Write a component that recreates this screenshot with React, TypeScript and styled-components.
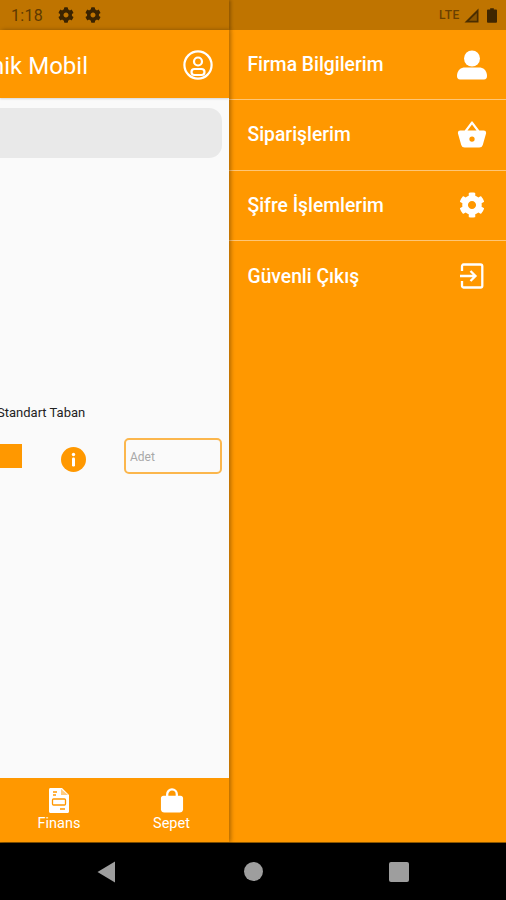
import React from "react";
import styled, { createGlobalStyle } from "styled-components";
import { FaCog } from "react-icons/fa";
import { IoBasket } from "react-icons/io5";

const Global = createGlobalStyle`
  html, body { margin: 0; padding: 0; background: #000; }
  body { font-family: Roboto, "Liberation Sans", sans-serif; }
`;

const Screen = styled.div`
  width: 506px; height: 900px; display: flex; flex-direction: column; overflow: hidden; background: #000;
`;
const StatusBar = styled.div`
  height: 30px; flex: none; display: flex; background: #bf7400; color: #4a2d00;
`;
const StatusLeft = styled.div`
  width: 229px; flex: none; display: flex; align-items: center; gap: 11px; padding-left: 11px; box-sizing: border-box;
  box-shadow: 2px 0 3px rgba(0,0,0,.25); position: relative;
`;
const Clock = styled.span`
  font-size: 16px; letter-spacing: .3px; color: #5e3900; margin-right: 4px;
`;
const StatusRight = styled.div`
  flex: 1; display: flex; align-items: center; justify-content: flex-end; padding-right: 9px;
`;
const Lte = styled.span`
  font-size: 12px; font-weight: 500; letter-spacing: .6px; color: #6a4000; margin-right: 4px;
`;
const SignalWrap = styled.span`
  display: flex; margin-right: 8px;
`;
const Body = styled.div`
  flex: 1; min-height: 0; display: flex;
`;
const AppPane = styled.div`
  width: 229px; flex: none; display: flex; flex-direction: column; background: #fafafa; overflow: hidden;
  box-shadow: 2px 0 4px rgba(0,0,0,.3); position: relative; z-index: 1;
`;
const AppHeader = styled.div`
  height: 68px; flex: none; background: #ff9800; display: flex; align-items: center; justify-content: flex-end;
  gap: 95px; padding-right: 16px; color: #fff; white-space: nowrap; box-shadow: 0 1px 2px rgba(0,0,0,.15);
  svg { flex: none; margin-top: 2px; }
`;
const Title = styled.span`
  font-size: 24px; flex: none; margin-top: 3px;
`;
const Content = styled.div`
  flex: 1; display: flex; flex-direction: column; min-height: 0;
`;
const SearchBar = styled.div`
  height: 50px; margin: 10px 7px 0 -20px; background: #e9e9e9; border-radius: 13px; flex: none;
`;
const ProductName = styled.div`
  margin: 247px 0 0 -3px; font-size: 13px; line-height: 16px; color: #222; white-space: nowrap;
`;
const ProductRow = styled.div`
  margin-top: 17px; display: flex; align-items: center; padding-right: 7px;
`;
const Swatch = styled.div`
  width: 22px; height: 24px; background: #ff9800; flex: none;
`;
const InfoWrap = styled.div`
  width: 102px; flex: none; display: flex; justify-content: center; margin-top: 6px;
  svg { display: block; }
`;
const Qty = styled.div`
  flex: 1; height: 36px; box-sizing: border-box; border: 2px solid #fbb64c; border-radius: 5px; background: #fafafa;
  display: flex; align-items: center; padding: 2px 0 0 4px; font-size: 12px; color: #a8a8a8;
`;
const Spacer = styled.div`flex: 1;`;
const BottomNav = styled.div`
  height: 64px; flex: none; background: #ff9800; display: grid; grid-template-columns: 118px 107px;
  margin-top: auto; color: #fff;
`;
const NavItem = styled.div`
  display: flex; flex-direction: column; align-items: center; padding-top: 10px; font-size: 14.500px; line-height: 16px;
  svg { display: block; margin-bottom: 3px; }
`;
const Drawer = styled.div`
  flex: 1; background: #ff9800; color: #fff;
`;
const DrawerRow = styled.div<{ $line?: boolean }>`
  height: 70.330px; box-sizing: border-box; display: flex; align-items: center; justify-content: space-between;
  padding: 0 18px 0 18.500px; font-size: 19.300px; font-weight: 500;
  border-bottom: ${(p) => (p.$line ? "1px solid #ffc675" : "none")};
`;
const IconBox = styled.span`
  width: 32px; display: flex; justify-content: center; font-size: 26px;
  svg { display: block; flex: none; }
`;
const NavBar = styled.div`
  height: 58px; flex: none; background: #000; border-top: 1px solid #8a5600; box-sizing: border-box;
  padding: 0 97px 0 97px; display: flex; align-items: center; justify-content: space-between;
`;
const HomeKey = styled.svg`
  margin-left: 2px;
`;

const ProfileIcon = () => (
  <svg width="30" height="30" viewBox="0 0 30 30" fill="none" stroke="#fff" strokeWidth="2.2">
    <circle cx="15" cy="15" r="13.6" />
    <circle cx="15" cy="11.5" r="4" />
    <rect x="8.5" y="19" width="13" height="6" rx="3" />
  </svg>
);
const PersonIcon = () => (
  <svg width="30" height="30" viewBox="0 0 30 30" fill="#fff">
    <circle cx="15" cy="8.5" r="8" />
    <path d="M0 26c0-6 4-8.500 8-8.500h14c4 0 8 2.500 8 8.500 0 2-1 3.500-3 3.500H3c-2 0-3-1.500-3-3.500z" />
  </svg>
);
const ExitIcon = () => (
  <svg width="24" height="26" viewBox="0 0 24 26" fill="none" stroke="#fff" strokeWidth="2.300">
    <path d="M2 8V3.500C2 2.400 2.600 1.500 3.500 1.500h17c1 0 1.800.8 1.800 1.800v19.400c0 1-.8 1.800-1.800 1.800h-17C2.500 24.500 2 23.600 2 22.500V18" />
    <path d="M0 13h15M10.500 8l5 5-5 5" />
  </svg>
);
const DocIcon = () => (
  <svg width="20" height="25" viewBox="0 0 20 25">
    <path fill="#fff" d="M0 1.500C0 .6.600 0 1.500 0H13l7 7v16.500c0 .9-.6 1.500-1.500 1.500h-17C.6 25 0 24.400 0 23.500z" />
    <rect x="3.500" y="11" width="13" height="6" rx="1" fill="none" stroke="#ff9800" strokeWidth="1.300" />
    <path stroke="#ff9800" strokeWidth="1.300" d="M4 4h4M4 7h3M11 21h5" />
    <path fill="#ff9800" d="M12 1v6h7z" opacity=".5" />
  </svg>
);
const BagIcon = () => (
  <svg width="24" height="25" viewBox="0 0 24 26">
    <path fill="none" stroke="#fff" strokeWidth="2.400" d="M7 9V6.500a5 5 0 0 1 10 0V9" />
    <path fill="#fff" d="M3 8h18c1.500 0 2.500 1 2.500 2.500V22c0 2-1.500 3.500-3.500 3.500H4C2 25.500.5 24 .5 22V10.500C.5 9 1.500 8 3 8z" />
  </svg>
);
const InfoIcon = () => (
  <svg width="25" height="25" viewBox="0 0 25 25">
    <circle cx="12.500" cy="12.500" r="12.500" fill="#ff9800" />
    <circle cx="12.500" cy="7.500" r="1.700" fill="#fff" />
    <rect x="11" y="10.500" width="3" height="9" rx="1.200" fill="#fff" />
  </svg>
);
const GearSmall = () => <FaCog size={16} color="#3a2300" />;

export default function App() {
  return (
    <Screen>
      <Global />
      <StatusBar>
        <StatusLeft>
          <Clock>1:18</Clock>
          <GearSmall />
          <GearSmall />
        </StatusLeft>
        <StatusRight>
          <Lte>LTE</Lte>
          <SignalWrap>
            <svg width="15" height="15" viewBox="0 0 15 15"><path fill="#4a2d00" d="M14.500 0.500V14.500H.5z" /><path fill="#bf7400" d="M12.800 5V12.800H5z" opacity=".55" /></svg>
          </SignalWrap>
          <svg width="10" height="15" viewBox="0 0 11 16"><path fill="#3f2600" d="M3.500 0h4v1.500H10a1 1 0 0 1 1 1V15a1 1 0 0 1-1 1H1a1 1 0 0 1-1-1V2.500a1 1 0 0 1 1-1h2.500z" /></svg>
        </StatusRight>
      </StatusBar>
      <Body>
        <AppPane>
          <AppHeader>
            <Title>Teknik Mobil</Title>
            <ProfileIcon />
          </AppHeader>
          <Content>
            <SearchBar />
            <ProductName>Standart Taban</ProductName>
            <ProductRow>
              <Swatch />
              <InfoWrap><InfoIcon /></InfoWrap>
              <Qty>Adet</Qty>
            </ProductRow>
            <Spacer />
            <BottomNav>
              <NavItem><DocIcon />Finans</NavItem>
              <NavItem><BagIcon />Sepet</NavItem>
            </BottomNav>
          </Content>
        </AppPane>
        <Drawer>
          <DrawerRow $line>Firma Bilgilerim<IconBox><PersonIcon /></IconBox></DrawerRow>
          <DrawerRow $line>Siparişlerim<IconBox><IoBasket size={36} /></IconBox></DrawerRow>
          <DrawerRow $line>Şifre İşlemlerim<IconBox><FaCog /></IconBox></DrawerRow>
          <DrawerRow>Güvenli Çıkış<IconBox><ExitIcon /></IconBox></DrawerRow>
        </Drawer>
      </Body>
      <NavBar>
        <svg width="19" height="22" viewBox="0 0 19 22"><path fill="#9e9e9e" d="M18 0.500V21.500L.5 11z" /></svg>
        <HomeKey width="19" height="19" viewBox="0 0 19 19"><circle cx="9.500" cy="9.500" r="9.500" fill="#9e9e9e" /></HomeKey>
        <svg width="20" height="20" viewBox="0 0 20 20"><rect width="20" height="20" rx="2" fill="#9e9e9e" /></svg>
      </NavBar>
    </Screen>
  );
}
